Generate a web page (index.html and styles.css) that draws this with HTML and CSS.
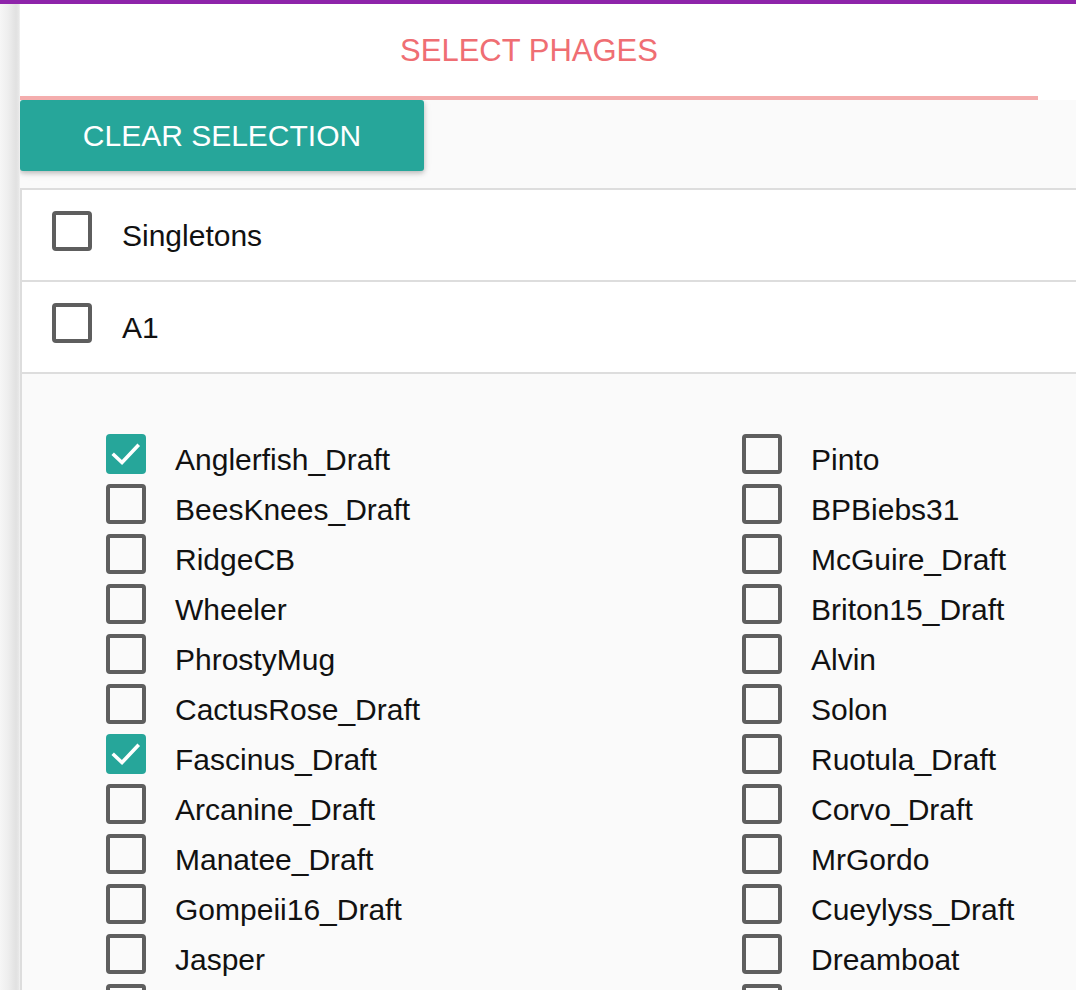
FILE: index.html
```html
<!DOCTYPE html>
<html>
<head>
<meta charset="utf-8">
<link rel="stylesheet" href="styles.css">
</head>
<body>
<div class="topbar"></div>
<div class="layout">
  <div class="strip"></div>
  <main class="main">
    <div class="tabs">
      <div class="tab active">SELECT PHAGES</div>
    </div>
    <div class="content">
      <button class="btn">CLEAR SELECTION</button>
      <div class="panel">
        <div class="row">
          <span class="cb"></span>
          <span class="row-label">Singletons</span>
        </div>
        <div class="row">
          <span class="cb"></span>
          <span class="row-label">A1</span>
        </div>
        <div class="sub">
          <div class="col">
            <div class="item"><span class="cb checked"><svg viewBox="0 0 40 40"><path d="M8 21 L16 28.5 L31.5 12"/></svg></span><span class="item-label">Anglerfish_Draft</span></div>
            <div class="item"><span class="cb"></span><span class="item-label">BeesKnees_Draft</span></div>
            <div class="item"><span class="cb"></span><span class="item-label">RidgeCB</span></div>
            <div class="item"><span class="cb"></span><span class="item-label">Wheeler</span></div>
            <div class="item"><span class="cb"></span><span class="item-label">PhrostyMug</span></div>
            <div class="item"><span class="cb"></span><span class="item-label">CactusRose_Draft</span></div>
            <div class="item"><span class="cb checked"><svg viewBox="0 0 40 40"><path d="M8 21 L16 28.5 L31.5 12"/></svg></span><span class="item-label">Fascinus_Draft</span></div>
            <div class="item"><span class="cb"></span><span class="item-label">Arcanine_Draft</span></div>
            <div class="item"><span class="cb"></span><span class="item-label">Manatee_Draft</span></div>
            <div class="item"><span class="cb"></span><span class="item-label">Gompeii16_Draft</span></div>
            <div class="item"><span class="cb"></span><span class="item-label">Jasper</span></div>
            <div class="item"><span class="cb"></span></div>
          </div>
          <div class="col">
            <div class="item"><span class="cb"></span><span class="item-label">Pinto</span></div>
            <div class="item"><span class="cb"></span><span class="item-label">BPBiebs31</span></div>
            <div class="item"><span class="cb"></span><span class="item-label">McGuire_Draft</span></div>
            <div class="item"><span class="cb"></span><span class="item-label">Briton15_Draft</span></div>
            <div class="item"><span class="cb"></span><span class="item-label">Alvin</span></div>
            <div class="item"><span class="cb"></span><span class="item-label">Solon</span></div>
            <div class="item"><span class="cb"></span><span class="item-label">Ruotula_Draft</span></div>
            <div class="item"><span class="cb"></span><span class="item-label">Corvo_Draft</span></div>
            <div class="item"><span class="cb"></span><span class="item-label">MrGordo</span></div>
            <div class="item"><span class="cb"></span><span class="item-label">Cueylyss_Draft</span></div>
            <div class="item"><span class="cb"></span><span class="item-label">Dreamboat</span></div>
            <div class="item"><span class="cb"></span></div>
          </div>
        </div>
      </div>
    </div>
  </main>
</div>
</body>
</html>
```
FILE: styles.css
```css
html, body {
  margin: 0;
  padding: 0;
  height: 100%;
  overflow: hidden;
  background: #fafafa;
  font-family: "Liberation Sans", Arial, sans-serif;
  color: #111;
}

.topbar {
  height: 4px;
  background: #8e24aa;
}

.layout {
  display: flex;
  height: 986px;
}

.strip {
  width: 20px;
  flex: 0 0 20px;
  background: linear-gradient(to right, #f6f6f6 0%, #eeeeee 40%, #e1e1e1 80%, #e6e6e6 92%, #f2f2f2 100%);
}

.main {
  flex: 1;
  min-width: 0;
  overflow: hidden;
}

.tabs {
  display: flex;
  height: 96px;
  background: #fff;
}

.tab {
  width: 1018px;
  flex: 0 0 1018px;
  display: flex;
  align-items: center;
  justify-content: center;
  font-size: 31px;
  color: #ef6e73;
  padding-top: 2px;
  box-sizing: border-box;
  height: 96px;
}

.tab.active {
  border-bottom: 4px solid #f4adad;
}

.content {
  background: #fafafa;
}

.btn {
  display: block;
  width: 404px;
  height: 71px;
  border: 0;
  border-radius: 3px;
  background: #26a69a;
  color: #fff;
  font-family: "Liberation Sans", Arial, sans-serif;
  font-size: 30px;
  padding: 0;
  box-shadow: 0 2px 5px rgba(0, 0, 0, 0.22), 0 2px 10px rgba(0, 0, 0, 0.08);
}

.panel {
  margin-top: 17px;
  width: 1400px;
  border-top: 2px solid #dddddd;
  border-left: 2px solid #dddddd;
  background: #fff;
}

.row {
  display: flex;
  align-items: center;
  height: 90px;
  padding-left: 30px;
  border-bottom: 2px solid #dddddd;
  gap: 30px;
  background: #fff;
}

.row .cb {
  margin-bottom: 9px;
}

.row-label {
  font-size: 30px;
  color: #111;
  padding-top: 2px;
}

.cb {
  display: block;
  width: 40px;
  height: 40px;
  box-sizing: border-box;
  border: 4px solid #5e5e5e;
  border-radius: 4px;
  flex: 0 0 40px;
}

.cb.checked {
  border: 0;
  background: #26a69a;
}

.cb svg {
  display: block;
  width: 40px;
  height: 40px;
}

.cb svg path {
  fill: none;
  stroke: #fff;
  stroke-width: 3.6;
  stroke-linecap: square;
  stroke-linejoin: miter;
}

.sub {
  display: flex;
  padding: 60px 0 0 84px;
  background: #fafafa;
}

.col {
  width: 636px;
  flex: 0 0 636px;
}

.item {
  display: flex;
  align-items: flex-start;
  height: 50px;
  gap: 29px;
}

.item-label {
  font-size: 30px;
  line-height: 52px;
  color: #111;
}
```
